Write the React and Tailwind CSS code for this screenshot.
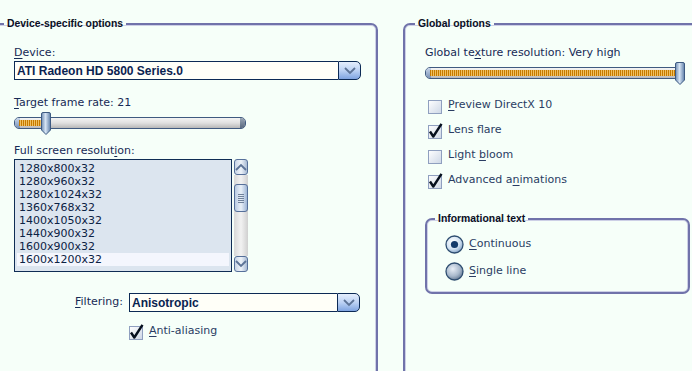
import React from 'react';

const ui = { fontFamily: '"DejaVu Sans", Verdana, sans-serif' };
const bold = { fontFamily: '"Liberation Sans", Arial, sans-serif' };

function U({ children }) {
  return <span className="underline underline-offset-2">{children}</span>;
}

function Chevron({ up }) {
  return (
    <svg width="12" height="8" viewBox="0 0 12 8">
      <path
        d={up ? 'M1 7 L6 2 L11 7' : 'M1 1 L6 6 L11 1'}
        fill="none"
        stroke="#5c7396"
        strokeWidth="1.8"
      />
    </svg>
  );
}

function Combo({ value, className }) {
  return (
    <div className={`flex h-[19px] ${className}`}>
      <div
        className="flex flex-1 items-center border border-r-0 border-[#0c2a55] bg-[#fffff8] pl-[2px] text-[12px] font-bold text-[#0b2350]"
        style={bold}
      >
        {value}
      </div>
      <div className="flex w-[23px] items-center justify-center rounded-r-[5px] border border-[#0c2a55] bg-gradient-to-b from-[#e4eefc] via-[#bcd2f4] to-[#7fa4e0]">
        <Chevron />
      </div>
    </div>
  );
}

function Thumb() {
  return (
    <svg width="10" height="23" viewBox="0 0 10 23">
      <defs>
        <linearGradient id="th" x1="0" x2="1" y1="0" y2="0">
          <stop offset="0" stopColor="#6f8db3" />
          <stop offset="0.45" stopColor="#d6e4f4" />
          <stop offset="1" stopColor="#5d7ea8" />
        </linearGradient>
      </defs>
      <path
        d="M2 0.5 H8 Q9.5 0.5 9.5 2 V18 L5 22.5 L0.5 18 V2 Q0.5 0.5 2 0.5 Z"
        fill="url(#th)"
        stroke="#3d5a82"
      />
    </svg>
  );
}

function Slider({ width, pos, fill }) {
  return (
    <div className="flex h-[23px] items-center" style={{ width }}>
      <div className="relative h-[12px] w-full rounded-[5px] border border-[#3f5a80] bg-gradient-to-b from-[#f4f4f4] via-[#e0e0e0] to-[#b8b8b8]">
        <div className="absolute left-0 top-0 h-full w-[5px] rounded-l-[4px] bg-gradient-to-b from-[#c8d6ea] to-[#7b93b6]" />
        <div
          className="absolute top-[2px] h-[6px] bg-[repeating-linear-gradient(90deg,#c67a00_0px,#c67a00_1px,#f0c060_1px,#f0c060_2px)]"
          style={{ left: 4, width: fill }}
        />
        <div className="absolute right-0 top-0 h-full w-[5px] rounded-r-[4px] bg-gradient-to-b from-[#9aa6b6] to-[#5a6a80]" />
        <div className="absolute top-[-6px]" style={{ left: pos }}>
          <Thumb />
        </div>
      </div>
    </div>
  );
}

function Check({ on }) {
  return (
    <svg width="16" height="16" viewBox="0 0 16 16" className="shrink-0">
      <defs>
        <linearGradient id="cb" x1="0" x2="1" y1="0" y2="1">
          <stop offset="0" stopColor="#ffffff" />
          <stop offset="1" stopColor="#cdd7e6" />
        </linearGradient>
      </defs>
      <rect x="1.5" y="2.5" width="13" height="13" fill="url(#cb)" stroke="#8f9fbf" />
      {on && (
        <path
          d="M3 8.5 L6.3 13.5 L14.5 0.8"
          fill="none"
          stroke="#06101e"
          strokeWidth="2.4"
          strokeLinejoin="round"
        />
      )}
    </svg>
  );
}

function CheckRow({ on, children }) {
  return (
    <div className="flex h-[25px] items-center gap-[5px] text-[11px] text-[#2a3d63]">
      <Check on={on} />
      <span>{children}</span>
    </div>
  );
}

function Radio({ on }) {
  return (
    <svg width="19" height="19" viewBox="0 0 19 19" className="shrink-0">
      <defs>
        <radialGradient id={on ? 'ron' : 'roff'} cx="0.4" cy="0.35" r="0.7">
          <stop offset="0" stopColor={on ? '#ffffff' : '#e8eef6'} />
          <stop offset="0.6" stopColor={on ? '#d2e2f2' : '#a9b9cc'} />
          <stop offset="1" stopColor={on ? '#7d9cc0' : '#5f7590'} />
        </radialGradient>
      </defs>
      <circle cx="9.5" cy="9.5" r="8.5" fill={`url(#${on ? 'ron' : 'roff'})`} stroke="#2e4d70" strokeWidth="1.3" />
      {on && <circle cx="9.5" cy="9.5" r="3.6" fill="#143a6a" />}
    </svg>
  );
}

const modes = [
  '1280x800x32',
  '1280x960x32',
  '1280x1024x32',
  '1360x768x32',
  '1400x1050x32',
  '1440x900x32',
  '1600x900x32',
  '1600x1200x32',
];

function ScrollBtn({ up }) {
  return (
    <div className="flex h-[16px] items-center justify-center rounded-[3px] border border-[#56709a] bg-gradient-to-r from-[#c7d4e6] via-[#eef3f9] to-[#a9bbd4]">
      <Chevron up={up} />
    </div>
  );
}

function ResList() {
  return (
    <div className="mt-[2px] flex h-[113px] gap-[2px]">
      <div className="w-[218px] border border-[#0f2d55] bg-[#dce5ef] px-[2px] pt-[2px] text-[11px] leading-[13px] text-[#0c2244]">
        {modes.map((m, i) => (
          <div key={m} className={`pl-[2px] ${i === modes.length - 1 ? 'bg-[#f4f6fd]' : ''}`}>
            {m}
          </div>
        ))}
      </div>
      <div className="flex w-[14px] flex-col">
        <ScrollBtn up />
        <div className="flex flex-1 flex-col bg-gradient-to-r from-[#d8d8d8] via-[#f2f2f2] to-[#d0d0d0] pt-[9px]">
          <div className="flex h-[28px] flex-col items-center justify-center gap-[1px] rounded-[3px] border border-[#56709a] bg-gradient-to-r from-[#b9cbe3] via-[#e9f0f8] to-[#9fb6d6]">
            {[0, 1, 2, 3, 4].map((k) => (
              <div key={k} className="h-px w-[6px] bg-[#6f819b]" />
            ))}
          </div>
        </div>
        <ScrollBtn />
      </div>
    </div>
  );
}

const legend = 'px-[3px] text-[10.4px] font-bold leading-[14px] text-[#0a0f24]';

export default function App() {
  return (
    <div className="flex h-[371px] w-[692px] overflow-hidden bg-[#f6fff9] text-[#172a55]" style={ui}>
      <fieldset className="-ml-[10px] mt-[17px] h-[400px] w-[388px] shrink-0 rounded-tr-[7px] border-2 border-[#7073aa] p-0 shadow-[inset_0_0_0_1px_#cdd0e6]">
        <legend className={`ml-[12px] ${legend}`} style={bold}>
          Device-specific options
        </legend>
        <div className="pl-[22px] pr-[15px]">
          <div className="mt-[15px] text-[11px] leading-[13px]">
            <U>D</U>evice:
          </div>
          <Combo value="ATI Radeon HD 5800 Series.0" className="mt-[2px]" />
          <div className="mt-[16px] text-[11px] leading-[13px]">
            <U>T</U>arget frame rate: 21
          </div>
          <div className="mt-[2px]">
            <Slider width={232} pos={26} fill={22} />
          </div>
          <div className="mt-[10px] text-[11px] leading-[13px]">
            Full screen resolut<U>i</U>on:
          </div>
          <ResList />
          <div className="mt-[21px] flex items-center">
            <div className="w-[115px] pr-[6px] text-right text-[11px]">
              <U>F</U>iltering:
            </div>
            <Combo value="Anisotropic" className="w-[231px]" />
          </div>
          <div className="mt-[7px] pl-[114px]">
            <CheckRow on>
              <U>A</U>nti-aliasing
            </CheckRow>
          </div>
        </div>
      </fieldset>

      <fieldset className="ml-[25px] mt-[17px] h-[400px] w-[320px] shrink-0 rounded-tl-[7px] border-2 border-[#7073aa] p-0 shadow-[inset_0_0_0_1px_#cdd0e6]">
        <legend className={`ml-[10px] ${legend}`} style={bold}>
          Global options
        </legend>
        <div className="pl-[20px]">
          <div className="mt-[15px] text-[11px] leading-[13px]">
            Global te<U>x</U>ture resolution: Very high
          </div>
          <div className="mt-[2px]">
            <Slider width={258} pos={249} fill={248} />
          </div>
          <div className="mt-[9px] pl-[2px]">
            <CheckRow>
              <U>P</U>review DirectX 10
            </CheckRow>
            <CheckRow on>
              Lens f<U>l</U>are
            </CheckRow>
            <CheckRow>
              Light <U>b</U>loom
            </CheckRow>
            <CheckRow on>
              Advanced a<U>n</U>imations
            </CheckRow>
          </div>
          <fieldset className="mt-[19px] h-[82px] w-[265px] rounded-[7px] border-2 border-[#7073aa] p-0 shadow-[inset_0_0_0_1px_#cdd0e6]">
            <legend className={`ml-[8px] ${legend}`} style={bold}>
              Informational text
            </legend>
            <div className="pl-[18px]">
              <div className="mt-[5px] flex h-[27px] items-center gap-[5px] text-[11px] text-[#2a3d63]">
                <Radio on />
                <span>
                  <U>C</U>ontinuous
                </span>
              </div>
              <div className="flex h-[27px] items-center gap-[5px] text-[11px] text-[#2a3d63]">
                <Radio />
                <span>
                  <U>S</U>ingle line
                </span>
              </div>
            </div>
          </fieldset>
        </div>
      </fieldset>
    </div>
  );
}
